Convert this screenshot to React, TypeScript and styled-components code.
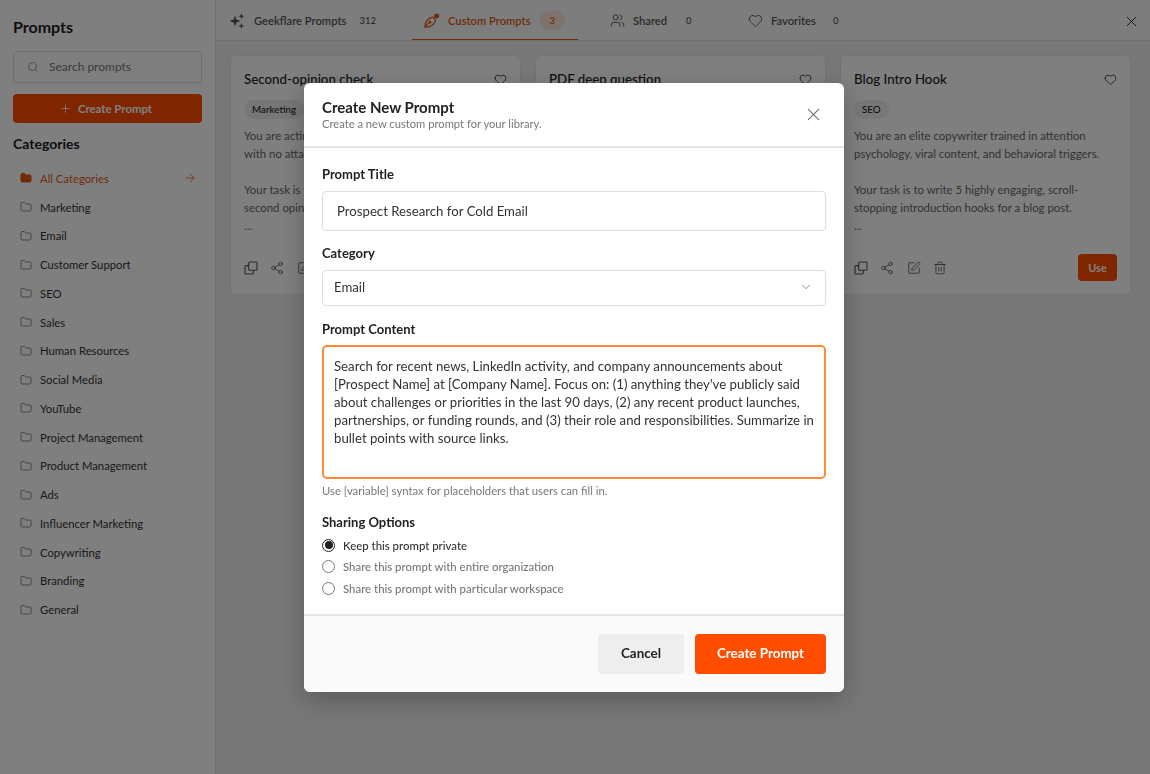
import React from "react";
import styled, { createGlobalStyle } from "styled-components";
import { ArrowRight, ChevronDown, Folder, Heart, Plus, Search, Share2, SquarePen, Trash2, Users, X } from "lucide-react";

const Global = createGlobalStyle`
  * { box-sizing: border-box; }
  html, body { margin: 0; height: 100%; overflow: hidden; }
  body { font-family: "Lato", "Noto Sans", sans-serif; color: #1c1c1c; background: #fff; }
`;

const Page = styled.div`
  display: grid;
  grid-template-columns: 216px 1fr;
  width: 1150px;
  height: 774px;
`;
const Sidebar = styled.aside`
  display: flex;
  flex-direction: column;
  padding: 17px 13px 0;
  background: #fff;
  border-right: 1px solid #e3e3e3;
`;
const SideTitle = styled.h1`
  margin: 0 0 14px;
  font-size: 16px;
  line-height: 20px;
  font-weight: 700;
`;
const SearchBox = styled.div`
  display: flex;
  align-items: center;
  gap: 10px;
  height: 32px;
  width: 189px;
  padding: 0 13px 1px;
  border: 1px solid #ddd;
  border-radius: 4px;
  font-size: 12px;
  color: #777;
  svg { flex: none; }
`;
const SideCreate = styled.div`
  display: flex;
  align-items: center;
  justify-content: center;
  gap: 6px;
  width: 189px;
  height: 29px;
  margin-top: 11px;
  padding-right: 4px;
  border-radius: 4px;
  background: #ff4d00;
  color: #fff;
  font-size: 11.4px;
  font-weight: 700;
`;
const SideHeading = styled.h2`
  margin: 12px 0 11px;
  font-size: 14px;
  line-height: 18px;
  font-weight: 700;
`;
const CatList = styled.div`
  display: flex;
  flex-direction: column;
`;
const CatRow = styled.div<{ $active?: boolean }>`
  display: flex;
  align-items: center;
  gap: 8px;
  height: 28.75px;
  padding: 0 5px 0 7px;
  font-size: 11.3px;
  color: ${(p) => (p.$active ? "#e0590f" : "#333")};
  span { flex: 1; }
  svg { flex: none; }
`;
const Main = styled.main`
  display: flex;
  flex-direction: column;
  min-width: 0;
  background: #efefef;
`;
const Tabs = styled.nav`
  display: flex;
  align-items: flex-start;
  height: 41px;
  padding: 0 10px 0 14px;
  background: #fbfbfb;
  border-bottom: 1px solid #e3e3e3;
`;
const Tab = styled.div<{ $active?: boolean; $width: number }>`
  display: flex;
  align-items: center;
  width: ${(p) => p.$width}px;
  height: 40px;
  padding: 2px 0 0 ${(p) => (p.$active ? 12 : 0)}px;
  gap: 8px;
  font-size: 11.2px;
  font-weight: 600;
  color: ${(p) => (p.$active ? "#e0590f" : "#555")};
  border-bottom: 1px solid ${(p) => (p.$active ? "#e0590f" : "transparent")};
  svg { flex: none; }
`;
const Count = styled.span<{ $gap: number }>`
  margin-left: ${(p) => p.$gap}px;
  font-size: 9.5px;
  font-weight: 500;
`;
const CountPill = styled.span`
  margin-left: 1px;
  width: 25px;
  height: 19px;
  display: flex;
  align-items: center;
  justify-content: center;
  margin-top: -1px;
  border-radius: 10px;
  background: #fbe6d8;
  font-size: 10px;
  font-weight: 500;
`;
const TabClose = styled.div`
  display: flex;
  align-items: center;
  height: 40px;
  padding-top: 2px;
  margin-left: auto;
  color: #333;
`;
const Cards = styled.div`
  display: grid;
  grid-template-columns: repeat(3, 291px);
  gap: 14px;
  padding: 14px 14px 0;
  align-items: start;
`;
const Card = styled.article`
  height: 240px;
  padding: 13px 13px 13px;
  background: #fff;
  border: 1px solid #e6e6e6;
  border-radius: 5px;
  display: flex;
  flex-direction: column;
`;
const CardHead = styled.div`
  display: flex;
  align-items: center;
  justify-content: space-between;
  height: 20px;
  font-size: 13.3px;
  font-weight: 500;
  color: #222;
`;
const Badge = styled.span`
  align-self: flex-start;
  margin-top: 11px;
  height: 19px;
  padding: 0 8px;
  line-height: 19px;
  border-radius: 10px;
  background: #eee;
  font-size: 9.8px;
  font-weight: 500;
`;
const CardText = styled.p`
  margin: 8px 0 0;
  font-size: 11.4px;
  line-height: 18px;
  color: #666;
  white-space: pre-line;
  overflow: hidden;
`;
const CardFoot = styled.div`
  margin-top: auto;
  display: flex;
  align-items: center;
  gap: 12.3px;
  color: #555;
  svg { flex: none; }
`;
const UseBtn = styled.div`
  margin-left: auto;
  width: 39px;
  height: 27px;
  border-radius: 4px;
  background: #ff4d00;
  color: #fff;
  font-size: 11px;
  font-weight: 700;
  display: flex;
  align-items: center;
  justify-content: center;
`;
const Overlay = styled.div`
  position: fixed;
  inset: 0;
  padding-right: 2px;
  background: rgba(0, 0, 0, 0.5);
  display: flex;
  align-items: center;
  justify-content: center;
`;
const Modal = styled.div`
  width: 540px;
  height: 609px;
  background: #fff;
  border-radius: 6px;
  overflow: hidden;
  display: flex;
  flex-direction: column;
  box-shadow: 0 8px 24px rgba(0, 0, 0, 0.25);
`;
const ModalHead = styled.header`
  display: flex;
  align-items: center;
  justify-content: space-between;
  height: 65px;
  padding: 1px 20px 0 18px;
  border-bottom: 2px solid #e6e6e6;
  color: #555;
`;
const ModalTitle = styled.h2`
  margin: 0;
  font-size: 15px;
  line-height: 16px;
  font-weight: 700;
  color: #222;
`;
const ModalSub = styled.p`
  margin: 2px 0 0;
  font-size: 11.2px;
  line-height: 14px;
  color: #777;
`;
const ModalBody = styled.div`
  flex: 1;
  padding: 17px 18px 0;
  display: flex;
  flex-direction: column;
`;
const Label = styled.div<{ $top?: number }>`
  margin-top: ${(p) => p.$top ?? 0}px;
  margin-bottom: 8px;
  font-size: 13px;
  line-height: 18px;
  font-weight: 700;
  color: #222;
`;
const TitleInput = styled.div`
  display: flex;
  align-items: center;
  height: 40px;
  padding: 0 14px;
  border: 1px solid #ddd;
  border-radius: 4px;
  font-size: 13.2px;
  color: #333;
`;
const SelectBox = styled.div`
  display: flex;
  align-items: center;
  justify-content: space-between;
  height: 36px;
  padding: 0 12px 1px 11px;
  border: 1px solid #ddd;
  border-radius: 4px;
  font-size: 13.2px;
  color: #333;
`;
const Content = styled.div`
  height: 134px;
  margin-top: -1px;
  padding: 10px 4px 10px 10px;
  border: 2px solid #ff8a3c;
  border-radius: 5px;
  font-size: 13.2px;
  line-height: 18px;
  color: #333;
`;
const Hint = styled.div`
  margin-top: 5px;
  font-size: 11.3px;
  line-height: 14px;
  color: #777;
`;
const RadioList = styled.div`
  display: flex;
  flex-direction: column;
  margin-top: -4px;
`;
const RadioRow = styled.div<{ $on?: boolean }>`
  display: flex;
  align-items: center;
  gap: 8px;
  height: 21.5px;
  font-size: 11.4px;
  font-weight: 500;
  color: ${(p) => (p.$on ? "#333" : "#777")};
`;
const RadioDot = styled.span<{ $on?: boolean }>`
  width: 13px;
  height: 13px;
  flex: none;
  border-radius: 50%;
  border: 1px solid ${(p) => (p.$on ? "#222" : "#777")};
  display: grid;
  place-items: center;
  &::after {
    content: "";
    width: 8px;
    height: 8px;
    border-radius: 50%;
    background: ${(p) => (p.$on ? "#222" : "transparent")};
  }
`;
const ModalFoot = styled.footer`
  height: 78px;
  display: flex;
  align-items: center;
  justify-content: flex-end;
  gap: 11px;
  padding: 0 18px 0 0;
  background: #fafafa;
  border-top: 2px solid #e6e6e6;
`;
const FootBtn = styled.div<{ $primary?: boolean }>`
  height: 40px;
  width: ${(p) => (p.$primary ? 131 : 86)}px;
  padding-bottom: 2px;
  display: flex;
  align-items: center;
  justify-content: center;
  border-radius: 4px;
  font-size: 13.4px;
  font-weight: 700;
  background: ${(p) => (p.$primary ? "#ff4d00" : "#eee")};
  color: ${(p) => (p.$primary ? "#fff" : "#222")};
`;

const Sparkle = () => (
  <svg width="16" height="16" viewBox="0 0 16 16" fill="currentColor">
    <path d="M5 2.4 L6.4 6.6 L10.6 8 L6.4 9.4 L5 13.6 L3.6 9.4 L-.6 8 L3.6 6.6 Z" />
    <path d="M11.4 .3 L12.2 2.5 L14.4 3.3 L12.2 4.1 L11.4 6.3 L10.6 4.1 L8.4 3.3 L10.6 2.5 Z" />
    <path d="M11.4 10 L12.2 12.2 L14.4 13 L12.2 13.8 L11.4 16 L10.6 13.8 L8.4 13 L10.6 12.2 Z" />
  </svg>
);
const PenNib = () => (
  <svg width="16" height="16" viewBox="0 0 16 16" fill="none" stroke="currentColor" strokeWidth="1.2" strokeLinecap="round" strokeLinejoin="round">
    <path d="M.9 14 C1 10 2.5 5.5 8.8 4.2 L11.6 7.2 C10.6 12 6 14.4 .9 14 Z" />
    <path d="M.9 14 L5.2 9.7" />
    <circle cx="6" cy="9" r="1" />
    <circle cx="12.6" cy="3.1" r="2.5" fill="currentColor" stroke="none" />
  </svg>
);
const CopyIcon = () => (
  <svg width="14" height="14" viewBox="0 0 14 14" fill="none" stroke="currentColor" strokeWidth="1.1" strokeLinejoin="round">
    <rect x="4.7" y="1" width="8.3" height="8.3" rx="1" />
    <path d="M4.7 4.6H2a1 1 0 0 0-1 1V12a1 1 0 0 0 1 1h6.3a1 1 0 0 0 1-1V9.3" />
  </svg>
);

const categories = ["Marketing", "Email", "Customer Support", "SEO", "Sales", "Human Resources", "Social Media", "YouTube", "Project Management", "Product Management", "Ads", "Influencer Marketing", "Copywriting", "Branding", "General"];

const cards = [
  { title: "Second-opinion check", tag: "Marketing", text: "You are acting as a careful second reviewer\nwith no attachment to the original draft.\n\nYour task is to read the work and give a\nsecond opinion on what should change.\n..." },
  { title: "PDF deep question", tag: "Sales", text: "You are a research analyst who reads long\ndocuments closely and cites each page.\n\nYour task is to answer one deep question\nusing only the PDF that is attached.\n..." },
  { title: "Blog Intro Hook", tag: "SEO", text: "You are an elite copywriter trained in attention\npsychology, viral content, and behavioral triggers.\n\nYour task is to write 5 highly engaging, scroll-\nstopping introduction hooks for a blog post.\n..." },
];

export default function App() {
  return (
    <>
      <Global />
      <Page>
        <Sidebar>
          <SideTitle>Prompts</SideTitle>
          <SearchBox><Search size={12} strokeWidth={1.5} />Search prompts</SearchBox>
          <SideCreate><Plus size={13} strokeWidth={1.5} />Create Prompt</SideCreate>
          <SideHeading>Categories</SideHeading>
          <CatList>
            <CatRow $active><Folder size={12} fill="currentColor" /><span>All Categories</span><ArrowRight size={14} strokeWidth={1.25} /></CatRow>
            {categories.map((c) => (
              <CatRow key={c}><Folder size={12} strokeWidth={1.5} color="#666" /><span>{c}</span></CatRow>
            ))}
          </CatList>
        </Sidebar>
        <Main>
          <Tabs>
            <Tab $width={182}><Sparkle />Geekflare Prompts<Count $gap={5}>312</Count></Tab>
            <Tab $active $width={166}><PenNib />Custom Prompts<CountPill>3</CountPill></Tab>
            <Tab $width={138} style={{ marginLeft: 32 }}><Users size={15} strokeWidth={1.5} />Shared<Count $gap={11}>0</Count></Tab>
            <Tab $width={120}><Heart size={15} strokeWidth={1.5} />Favorites<Count $gap={9}>0</Count></Tab>
            <TabClose><X size={17} strokeWidth={1.4} /></TabClose>
          </Tabs>
          <Cards>
            {cards.map((c) => (
              <Card key={c.title}>
                <CardHead>{c.title}<Heart size={13} strokeWidth={1.5} /></CardHead>
                <Badge>{c.tag}</Badge>
                <CardText>{c.text}</CardText>
                <CardFoot>
                  <CopyIcon />
                  <Share2 size={14} strokeWidth={1.4} />
                  <SquarePen size={14} strokeWidth={1.4} />
                  <Trash2 size={14} strokeWidth={1.4} />
                  <UseBtn>Use</UseBtn>
                </CardFoot>
              </Card>
            ))}
          </Cards>
        </Main>
      </Page>
      <Overlay>
        <Modal>
          <ModalHead>
            <div>
              <ModalTitle>Create New Prompt</ModalTitle>
              <ModalSub>Create a new custom prompt for your library.</ModalSub>
            </div>
            <X size={21} strokeWidth={1.2} />
          </ModalHead>
          <ModalBody>
            <Label>Prompt Title</Label>
            <TitleInput>Prospect Research for Cold Email</TitleInput>
            <Label $top={13}>Category</Label>
            <SelectBox>Email<ChevronDown size={14} strokeWidth={1.25} color="#666" /></SelectBox>
            <Label $top={14}>Prompt Content</Label>
            <Content>Search for recent news, LinkedIn activity, and company announcements about [Prospect Name] at [Company Name]. Focus on: (1) anything they've publicly said about challenges or priorities in the last 90 days, (2) any recent product launches, partnerships, or funding rounds, and (3) their role and responsibilities. Summarize in bullet points with source links.</Content>
            <Hint>Use [variable] syntax for placeholders that users can fill in.</Hint>
            <Label $top={15}>Sharing Options</Label>
            <RadioList>
              <RadioRow $on><RadioDot $on />Keep this prompt private</RadioRow>
              <RadioRow><RadioDot />Share this prompt with entire organization</RadioRow>
              <RadioRow><RadioDot />Share this prompt with particular workspace</RadioRow>
            </RadioList>
          </ModalBody>
          <ModalFoot>
            <FootBtn>Cancel</FootBtn>
            <FootBtn $primary>Create Prompt</FootBtn>
          </ModalFoot>
        </Modal>
      </Overlay>
    </>
  );
}
